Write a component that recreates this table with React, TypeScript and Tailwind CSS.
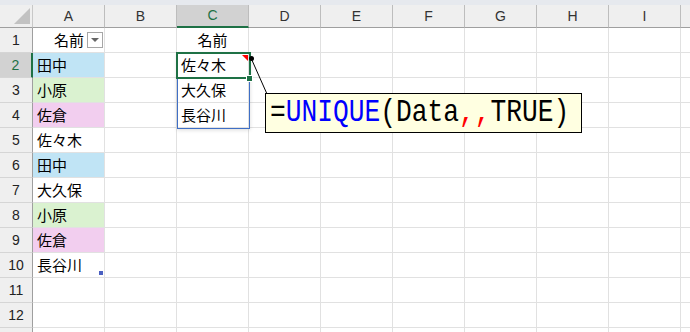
import React from "react";

const cols = ["A", "B", "C", "D", "E", "F", "G", "H", "I"];
const aVals: { t: string; bg?: string }[] = [
  { t: "名前" },
  { t: "田中", bg: "bg-[#c0e4f5]" },
  { t: "小原", bg: "bg-[#daf2d0]" },
  { t: "佐倉", bg: "bg-[#f2ceef]" },
  { t: "佐々木" },
  { t: "田中", bg: "bg-[#c0e4f5]" },
  { t: "大久保" },
  { t: "小原", bg: "bg-[#daf2d0]" },
  { t: "佐倉", bg: "bg-[#f2ceef]" },
  { t: "長谷川" },
  { t: "" },
  { t: "" },
  { t: "" },
];
const cVals = ["名前", "佐々木", "大久保", "長谷川"];

export default function App() {
  const rows = Array.from({ length: 13 }, (_, i) => i + 1);
  return (
    <div
      className="relative w-[690px] h-[332px] overflow-hidden bg-white text-black"
      style={{ fontFamily: '"Noto Sans CJK JP", "Noto Sans", sans-serif' }}
    >
      <div className="h-[5px] bg-[#e6e9ee]" />
      {/* header row */}
      <div className="flex h-[23px]">
        <div className="relative w-[33px] shrink-0 bg-[#efefef] border-r border-[#c8c8c8] border-b border-b-[#9f9f9f]">
          <div className="absolute right-[2px] bottom-[3px] w-0 h-0 border-l-[16px] border-l-transparent border-b-[16px] border-b-[#c2c2c2]" />
        </div>
        {cols.map((c) => (
          <div
            key={c}
            className={`w-[72px] shrink-0 flex items-center justify-center text-[14px] border-r border-[#bdbdbd] ${
              c === "C"
                ? "bg-[#d2d2d2] border-b-2 border-b-[#1e7145] text-[#1e7145]"
                : "bg-[#efefef] border-b border-b-[#9f9f9f] text-[#333]"
            }`}
            style={{ fontFamily: '"Liberation Sans", Arial, sans-serif' }}
          >
            {c}
          </div>
        ))}
        <div className="flex-1 bg-[#efefef] border-b border-b-[#9f9f9f]" />
      </div>
      {rows.map((r) => (
        <div key={r} className="flex h-[25px]">
          <div
            className={`w-[33px] shrink-0 flex items-center justify-center text-[14px] border-b border-b-[#d5d5d5] ${
              r === 2
                ? "bg-[#d2d2d2] border-r-2 border-r-[#1e7145] text-[#1e7145]"
                : "bg-[#efefef] border-r border-r-[#9f9f9f] text-[#222]"
            }`}
            style={{ fontFamily: '"Liberation Sans", Arial, sans-serif' }}
          >
            {r <= 12 ? r : ""}
          </div>
          {cols.map((c) => {
            let content: React.ReactNode = null;
            let bg = "";
            if (c === "A") {
              bg = aVals[r - 1].bg ?? "";
              if (r === 1) {
                content = (
                  <div className="flex w-full items-center justify-end pr-[1px]">
                    <span className="text-[15px] mr-[3px]">名前</span>
                    <div className="w-[16px] h-[16px] border border-[#a6a6a6] bg-white flex items-center justify-center">
                      <div className="w-0 h-0 border-l-[4px] border-r-[4px] border-t-[4px] border-l-transparent border-r-transparent border-t-[#666]" />
                    </div>
                  </div>
                );
              } else {
                content = <span className="pl-[4px] text-[15px]">{aVals[r - 1].t}</span>;
              }
            }
            if (c === "C" && r <= 4) {
              content =
                r === 1 ? (
                  <span className="w-full text-center text-[15px]">{cVals[0]}</span>
                ) : (
                  <span className="pl-[4px] text-[15px]">{cVals[r - 1]}</span>
                );
            }
            return (
              <div
                key={c}
                className={`relative w-[72px] shrink-0 flex items-center border-r border-b border-[#e1e1e1] ${bg}`}
              >
                {content}
                {c === "A" && r === 10 && (
                  <div className="absolute right-[1px] bottom-[2px] w-[4px] h-[4px] bg-[#4a5fc1]" />
                )}
              </div>
            );
          })}
          <div className="flex-1 border-b border-[#e1e1e1]" />
        </div>
      ))}

      {/* spill range border */}
      <div className="absolute left-[177px] top-[53px] w-[73px] h-[76px] border border-[#3f6fc6] shadow-[0_1px_4px_rgba(0,0,0,0.15)]" />
      {/* active cell border */}
      <div className="absolute left-[176px] top-[52px] w-[75px] h-[27px] border-2 border-[#1e7145]">
        <div className="absolute right-[1px] top-[1px] w-0 h-0 border-l-[6px] border-l-transparent border-t-[6px] border-t-[#ff0000]" />
      </div>
      <div className="absolute left-[246px] top-[75px] w-[7px] h-[7px] bg-[#1e7145] border border-white" />

      {/* callout connector */}
      <svg className="absolute left-0 top-0" width="690" height="332">
        <line x1="251" y1="58" x2="267" y2="94" stroke="#000" strokeWidth="1" />
        <circle cx="251.5" cy="58.5" r="2.5" fill="#000" />
      </svg>

      {/* callout */}
      <div className="absolute left-[265px] top-[93px] w-[317px] h-[40px] bg-[#ffffe1] border border-black flex items-center pl-[4px]">
        <span
          className="text-[32px] leading-none whitespace-pre scale-x-[0.82] origin-left inline-block"
          style={{ fontFamily: '"Liberation Mono", "DejaVu Sans Mono", monospace' }}
        >
          <span className="text-black">=</span>
          <span className="text-[#0000ff]">UNIQUE</span>
          <span className="text-black">(Data</span>
          <span className="text-[#ff0000]">,,</span>
          <span className="text-black">TRUE)</span>
        </span>
      </div>
    </div>
  );
}
